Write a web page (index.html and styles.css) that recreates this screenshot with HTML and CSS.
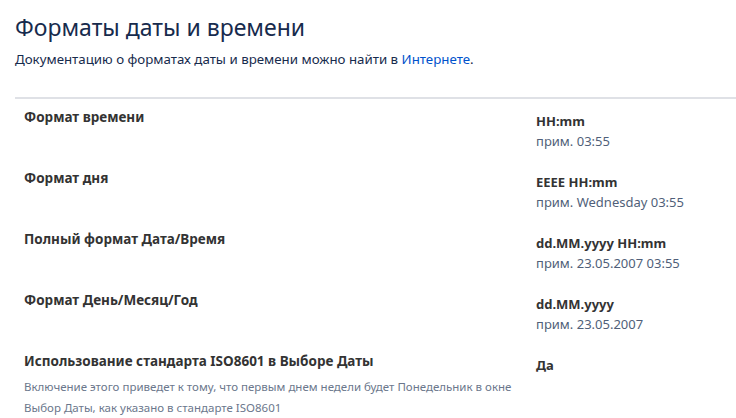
FILE: index.html
```html
<!DOCTYPE html>
<html lang="ru">
<head>
    <meta charset="UTF-8">
    <meta name="viewport" content="width=device-width, initial-scale=1.0">
    <title>Форматы даты и времени</title>
    <link rel="stylesheet" href="styles.css">
</head>
<body>
    <div class="page">
        <h1>Форматы даты и времени</h1>
        <p class="intro">Документацию о форматах даты и времени можно найти в <a href="#">Интернете</a>.</p>
        <div class="formats">
            <div class="row">
                <div class="label">Формат времени</div>
                <div class="value">
                    <div class="pattern">HH:mm</div>
                    <div class="sample">прим. 03:55</div>
                </div>
            </div>
            <div class="row">
                <div class="label">Формат дня</div>
                <div class="value">
                    <div class="pattern">EEEE HH:mm</div>
                    <div class="sample">прим. Wednesday 03:55</div>
                </div>
            </div>
            <div class="row">
                <div class="label">Полный формат Дата/Время</div>
                <div class="value">
                    <div class="pattern">dd.MM.yyyy HH:mm</div>
                    <div class="sample">прим. 23.05.2007 03:55</div>
                </div>
            </div>
            <div class="row">
                <div class="label">Формат День/Месяц/Год</div>
                <div class="value">
                    <div class="pattern">dd.MM.yyyy</div>
                    <div class="sample">прим. 23.05.2007</div>
                </div>
            </div>
            <div class="row last">
                <div class="label">
                    Использование стандарта ISO8601 в Выборе Даты
                    <p class="desc">Включение этого приведет к тому, что первым днем недели будет Понедельник в окне Выбор Даты, как указано в стандарте ISO8601</p>
                </div>
                <div class="value">
                    <div class="pattern">Да</div>
                </div>
            </div>
        </div>
    </div>
</body>
</html>
```

FILE: styles.css
```css
body {
    margin: 0;
    font-family: "Noto Sans", "Open Sans", sans-serif;
    color: #172b4d;
    background: #fff;
}
.page {
    padding-left: 15px;
}
h1 {
    margin: 0;
    padding-top: 11px;
    font-size: 23px;
    font-weight: 400;
    line-height: 32px;
    color: #172b4d;
}
.intro {
    margin: 6px 0 0;
    font-size: 13.3px;
    line-height: 20px;
    color: #172b4d;
}
.intro a {
    color: #0052cc;
    text-decoration: none;
}
.formats {
    margin-top: 28px;
    border-top: 2px solid #dfe1e6;
}
.row {
    display: grid;
    grid-template-columns: 521px 1fr;
    height: 61px;
    font-size: 13px;
    line-height: 20px;
}
.row.last {
    height: auto;
}
.label {
    padding: 8px 0 0 9px;
    font-size: 13.5px;
    font-weight: 700;
    color: #333;
}
.value {
    padding-top: 12px;
}
.pattern {
    font-weight: 700;
    color: #333;
}
.sample {
    color: #505f79;
}
.desc {
    margin: 5px 0 0;
    width: 500px;
    font-size: 11.5px;
    line-height: 21px;
    font-weight: 400;
    color: #6b778c;
}
```
